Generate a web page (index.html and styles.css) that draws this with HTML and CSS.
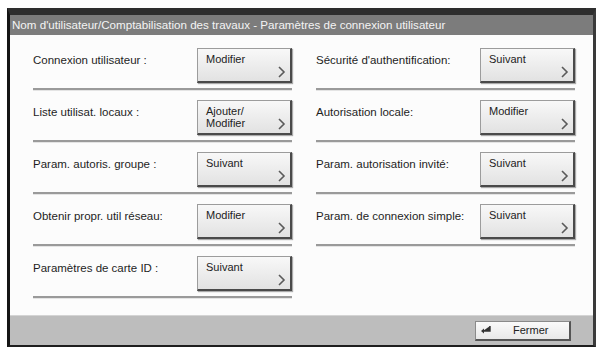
FILE: index.html
```html
<!DOCTYPE html>
<html lang="fr">
<head>
    <meta charset="UTF-8">
    <title>Paramètres de connexion utilisateur</title>
    <link rel="stylesheet" href="styles.css">
</head>
<body>
    <div class="frame">
        <div class="title-bar">Nom d'utilisateur/Comptabilisation des travaux - Paramètres de connexion utilisateur</div>

        <div class="content">
            <div class="column">
                <div class="row">
                    <span class="label">Connexion utilisateur :</span>
                    <div class="key">Modifier<svg class="chev" viewBox="0 0 8 12"><polyline points="1,1 6,6 1,11"/></svg></div>
                </div>
                <div class="row">
                    <span class="label">Liste utilisat. locaux :</span>
                    <div class="key">Ajouter/<br>Modifier<svg class="chev" viewBox="0 0 8 12"><polyline points="1,1 6,6 1,11"/></svg></div>
                </div>
                <div class="row">
                    <span class="label">Param. autoris. groupe :</span>
                    <div class="key">Suivant<svg class="chev" viewBox="0 0 8 12"><polyline points="1,1 6,6 1,11"/></svg></div>
                </div>
                <div class="row">
                    <span class="label">Obtenir propr. util réseau:</span>
                    <div class="key">Modifier<svg class="chev" viewBox="0 0 8 12"><polyline points="1,1 6,6 1,11"/></svg></div>
                </div>
                <div class="row">
                    <span class="label">Paramètres de carte ID :</span>
                    <div class="key">Suivant<svg class="chev" viewBox="0 0 8 12"><polyline points="1,1 6,6 1,11"/></svg></div>
                </div>
            </div>

            <div class="column">
                <div class="row">
                    <span class="label">Sécurité d'authentification:</span>
                    <div class="key">Suivant<svg class="chev" viewBox="0 0 8 12"><polyline points="1,1 6,6 1,11"/></svg></div>
                </div>
                <div class="row">
                    <span class="label">Autorisation locale:</span>
                    <div class="key">Modifier<svg class="chev" viewBox="0 0 8 12"><polyline points="1,1 6,6 1,11"/></svg></div>
                </div>
                <div class="row">
                    <span class="label">Param. autorisation invité:</span>
                    <div class="key">Suivant<svg class="chev" viewBox="0 0 8 12"><polyline points="1,1 6,6 1,11"/></svg></div>
                </div>
                <div class="row">
                    <span class="label">Param. de connexion simple:</span>
                    <div class="key">Suivant<svg class="chev" viewBox="0 0 8 12"><polyline points="1,1 6,6 1,11"/></svg></div>
                </div>
            </div>
        </div>

        <div class="footer">
            <div class="close">
                <svg class="enter" viewBox="0 0 12 10"><path d="M10 1 V6 H3"/><polygon points="1,6 4,3.5 4,8.5"/></svg>
                <span>Fermer</span>
            </div>
        </div>
    </div>
</body>
</html>
```

FILE: styles.css
```css
* {
    margin: 0;
    padding: 0;
    box-sizing: border-box;
}

body {
    font-family: "Liberation Sans", Arial, sans-serif;
    font-size: 11.5px;
    background: #fff;
    color: #222;
    padding: 8px 0 0 7px;
}

.frame {
    width: 589px;
    height: 339px;
    display: flex;
    flex-direction: column;
    background: #fcfcfc;
    border-top: 7px solid #2e2e2e;
    border-left: 3px solid #151515;
    border-right: 3px solid #3a3a3a;
    border-bottom: 2px solid #1e1e1e;
}

.title-bar {
    height: 20px;
    line-height: 20px;
    background: #7c7c7c;
    color: #f4f4f4;
    padding-left: 2px;
    font-size: 11.6px;
    white-space: nowrap;
    overflow: hidden;
}

.content {
    flex: 1;
    display: grid;
    grid-template-columns: 259px 259px;
    column-gap: 24px;
    padding: 13px 0 0 23px;
}

.row {
    display: flex;
    justify-content: space-between;
    align-items: flex-start;
    padding-bottom: 5px;
    margin-bottom: 10px;
    border-bottom: 2px solid #9a9a9a;
    box-shadow: 0 1px 0 #e4e4e4;
}

.label {
    padding-top: 6px;
    color: #1e1e1e;
}

.key {
    position: relative;
    width: 95px;
    height: 35px;
    font-size: 11px;
    line-height: 12px;
    color: #222;
    padding: 4px 0 0 8px;
    background: linear-gradient(#f8f8f8, #e2e2e2);
    border: 1px solid #9c9c9c;
    border-right: 2px solid #4a4a4a;
    border-bottom: 2px solid #4a4a4a;
    box-shadow: 1px 1px 1px #aaa;
}

.chev {
    position: absolute;
    right: 4px;
    bottom: 3px;
    width: 8px;
    height: 12px;
    fill: none;
    stroke: #5a5a5a;
    stroke-width: 1.6;
}

.footer {
    height: 30px;
    background: #bdbdbd;
    border-top: 1px solid #d4d4d4;
    display: flex;
    justify-content: flex-end;
    align-items: center;
    padding-right: 22px;
}

.close {
    width: 96px;
    height: 20px;
    display: flex;
    align-items: center;
    font-size: 11px;
    color: #222;
    background: linear-gradient(#fafafa, #e8e8e8);
    border: 1px solid #8a8a8a;
    border-right: 2px solid #555;
    border-bottom: 2px solid #555;
    padding-left: 4px;
}

.close span {
    margin-left: 21px;
}

.enter {
    width: 12px;
    height: 10px;
    fill: #333;
    stroke: #333;
    stroke-width: 1.4;
}

.enter polygon {
    stroke: none;
}
```
